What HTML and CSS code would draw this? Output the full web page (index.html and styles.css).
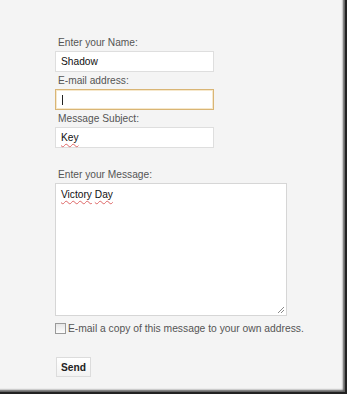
FILE: index.html
```html
<!DOCTYPE html>
<html>
<head>
<meta charset="utf-8">
<link rel="stylesheet" href="styles.css">
</head>
<body>
<div class="page">
  <form class="contact">
    <div class="label">Enter your Name:</div>
    <div class="field">Shadow</div>
    <div class="label">E-mail address:</div>
    <div class="field focused"><span class="caret"></span></div>
    <div class="label">Message Subject:</div>
    <div class="field subject"><span class="typo">Key</span></div>
    <div class="label">Enter your Message:</div>
    <div class="textarea"><span class="typo">Victory</span> <span class="typo">Day</span>
      <svg class="grip" width="8" height="8" viewBox="0 0 8 8"><path d="M7 1 L1 7 M7 4 L4 7" stroke="#8a8a8a" stroke-width="1" fill="none"/></svg>
    </div>
    <div class="check-row"><span class="checkbox"></span><span>E-mail a copy of this message to your own address.</span></div>
    <div class="send">Send</div>
  </form>
</div>
</body>
</html>
```
FILE: styles.css
```css
html, body {
  margin: 0;
  padding: 0;
}
body {
  width: 347px;
  height: 394px;
  overflow: hidden;
  background: #f4f4f4;
  font-family: "Liberation Sans", Arial, sans-serif;
}
.page {
  width: 347px;
  height: 394px;
  box-sizing: border-box;
  background: #f4f4f4;
  box-shadow: inset -2px -2px 0 #222, inset -4px -4px 2px #5e5e5e;
}
.contact {
  margin: 0;
  padding: 36px 0 0 55px;
  display: flex;
  flex-direction: column;
  align-items: flex-start;
}
.label {
  font-size: 10.2px;
  line-height: 13px;
  color: #555;
  padding-left: 3px;
  margin-bottom: 2px;
}
.field {
  width: 159px;
  height: 21px;
  box-sizing: border-box;
  border: 1px solid #dedede;
  background: #fff;
  font-size: 10.2px;
  line-height: 19px;
  color: #111;
  padding-left: 5px;
  margin-bottom: 2px;
  display: flex;
  align-items: center;
}
.field.focused {
  border: 1px solid #d9b575;
  box-shadow: inset 0 0 0 1px #f6e8cc;
}
.field.subject {
  margin-bottom: 20px;
}
.caret {
  display: block;
  width: 1px;
  height: 10px;
  background: #222;
  margin-left: 1px;
}
.typo {
  text-decoration: underline wavy #d66;
  text-decoration-thickness: 1px;
  text-underline-offset: 2px;
}
.textarea {
  position: relative;
  width: 232px;
  height: 133px;
  box-sizing: border-box;
  border: 1px solid #d6d6d6;
  background: #fff;
  font-size: 10.2px;
  line-height: 12px;
  color: #111;
  padding: 5px 5px;
}
.grip {
  position: absolute;
  right: 1px;
  bottom: 1px;
}
.check-row {
  margin-top: 6px;
  display: flex;
  align-items: center;
  gap: 2px;
  font-size: 10.3px;
  line-height: 13px;
  color: #555;
}
.checkbox {
  width: 11px;
  height: 11px;
  box-sizing: border-box;
  border: 1px solid #9a9a9a;
  background: linear-gradient(#e6e6e6, #fdfdfd);
}
.send {
  margin-top: 22px;
  margin-left: 1px;
  width: 35px;
  height: 20px;
  box-sizing: border-box;
  border: 1px solid #dcdcdc;
  background: linear-gradient(#ffffff, #f2f2f2);
  font-size: 10.2px;
  font-weight: bold;
  color: #222;
  display: flex;
  align-items: center;
  justify-content: center;
}
```
